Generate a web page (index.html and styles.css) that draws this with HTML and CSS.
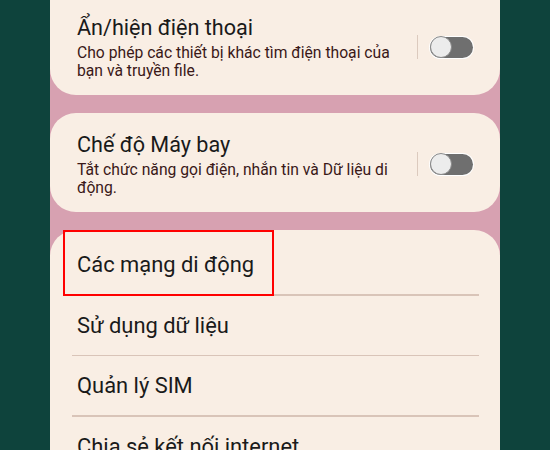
FILE: index.html
```html
<!DOCTYPE html>
<html lang="vi">
<head>
<meta charset="utf-8">
<link rel="stylesheet" href="styles.css">
</head>
<body>
<div class="phone">
  <div class="card card-first">
    <div class="setting">
      <div class="text">
        <div class="title">Ẩn/hiện điện thoại</div>
        <div class="sub">Cho phép các thiết bị khác tìm điện thoại của<br>bạn và truyền file.</div>
      </div>
      <div class="vdiv"></div>
      <div class="toggle"><div class="knob"></div></div>
    </div>
  </div>
  <div class="card">
    <div class="setting">
      <div class="text">
        <div class="title">Chế độ Máy bay</div>
        <div class="sub">Tắt chức năng gọi điện, nhắn tin và Dữ liệu di<br>động.</div>
      </div>
      <div class="vdiv"></div>
      <div class="toggle"><div class="knob"></div></div>
    </div>
  </div>
  <div class="card list">
    <div class="highlight"></div>
    <div class="item">Các mạng di động</div>
    <div class="sep"></div>
    <div class="item">Sử dụng dữ liệu</div>
    <div class="sep"></div>
    <div class="item">Quản lý SIM</div>
    <div class="sep"></div>
    <div class="item">Chia sẻ kết nối internet</div>
  </div>
</div>
</body>
</html>
```

FILE: styles.css
```css
html, body {
  margin: 0;
  padding: 0;
  height: 450px;
  overflow: hidden;
}
body {
  background: #0e433c;
  font-family: Roboto, "Noto Sans", "Liberation Sans", sans-serif;
}
.phone {
  width: 450px;
  margin-left: 50px;
  height: 454px;
  margin-top: -4px;
  background: #d7a1b1;
  display: flex;
  flex-direction: column;
  gap: 18px;
  overflow: hidden;
}
.card {
  background: #f9eee4;
  border-radius: 26px;
  flex-shrink: 0;
}
.card-first {
  border-radius: 0 0 26px 26px;
}
.setting {
  display: flex;
  align-items: center;
  padding: 18px 27px 15px 27px;
}
.text {
  flex: 1;
  min-width: 0;
}
.title {
  font-size: 21.6px;
  line-height: 28px;
  color: #1a1a1a;
}
.sub {
  margin-top: 2px;
  font-size: 15.7px;
  line-height: 18px;
  white-space: nowrap;
  color: #3a1818;
}
.vdiv {
  width: 1.5px;
  height: 24px;
  background: #dccabe;
  margin-left: 16px;
  margin-right: 12px;
}
.toggle {
  width: 43px;
  height: 21px;
  border-radius: 11px;
  background: #6f6f6f;
  box-shadow: 0 0 0 1px #ffffff;
  position: relative;
}
.knob {
  position: absolute;
  left: 0;
  top: -0.5px;
  width: 20px;
  height: 20px;
  border-radius: 50%;
  background: #ececec;
  border: 1px solid #8a8a8a;
}
.list {
  position: relative;
  padding-top: 5px;
  padding-bottom: 40px;
}
.item {
  font-size: 21.9px;
  line-height: 59px;
  padding-left: 27px;
  color: #1a1a1a;
}
.sep {
  height: 1.5px;
  margin: 0 21px 0 22px;
  background: #d9c4b8;
}
.highlight {
  position: absolute;
  left: 13px;
  top: 0;
  width: 211px;
  height: 66px;
  box-sizing: border-box;
  border: 2.5px solid #ff0000;
}
```
